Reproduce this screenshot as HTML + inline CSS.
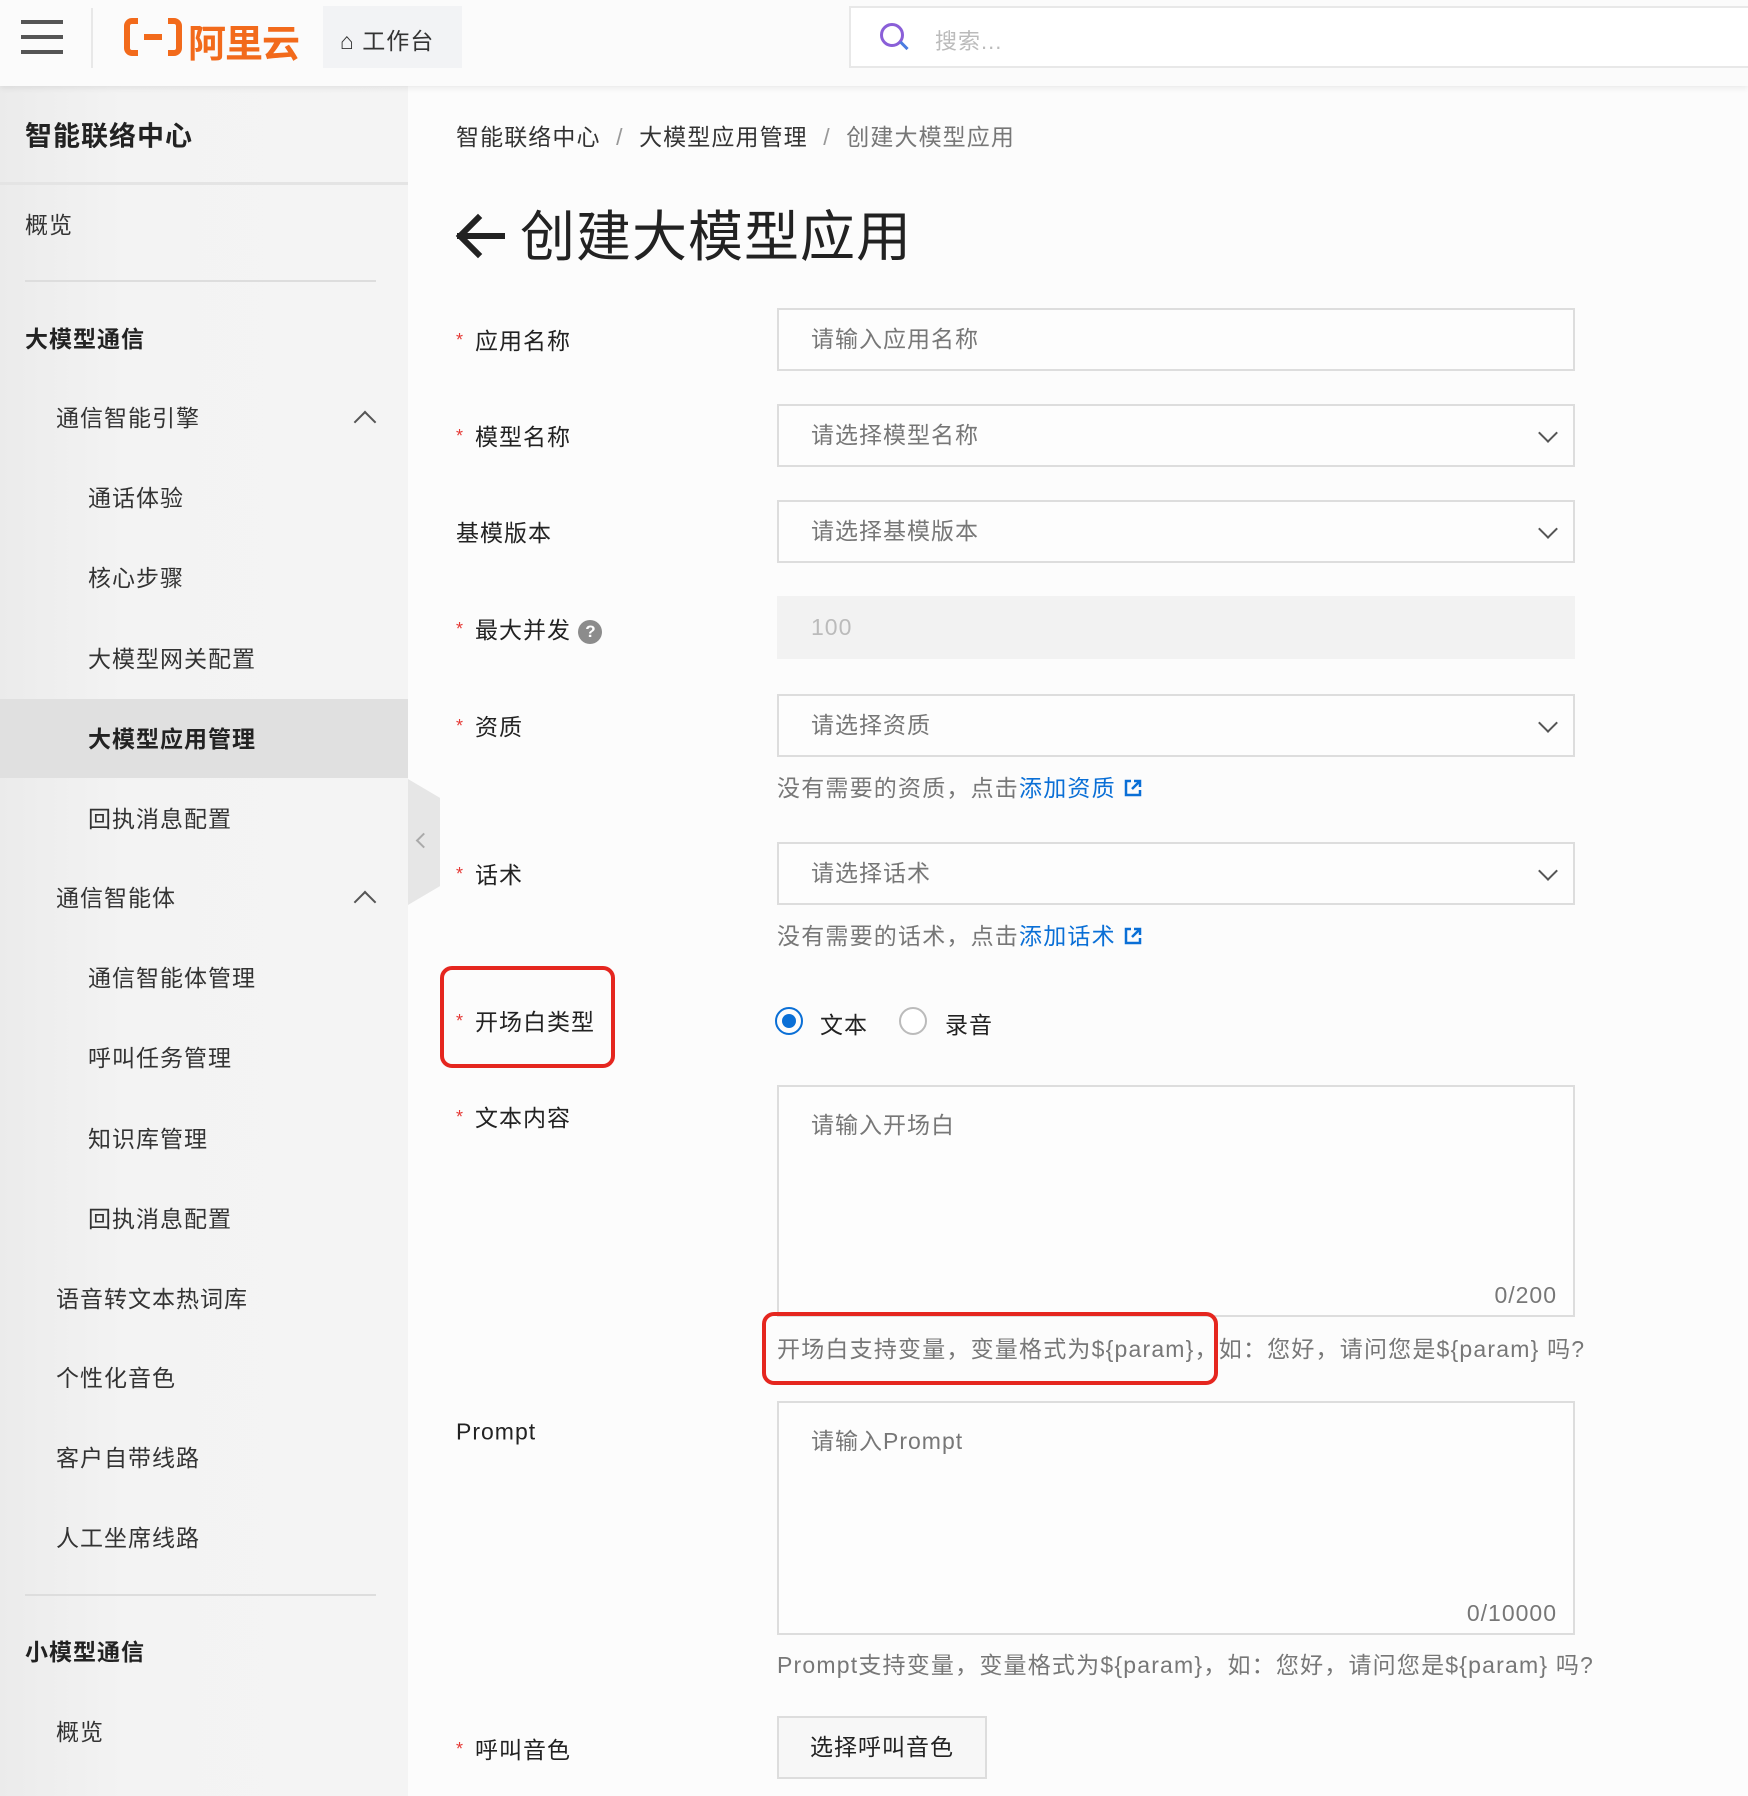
<!DOCTYPE html>
<html><head><meta charset="utf-8"><style>
*{box-sizing:border-box;margin:0;padding:0}
body{width:1748px;height:1796px;overflow:hidden;background:#fcfcfc;font-family:"Liberation Sans","Noto Sans CJK SC",sans-serif;color:#333;position:relative;letter-spacing:1px}
.a{position:absolute;white-space:nowrap}
.top{position:absolute;left:0;top:0;width:1748px;height:86px;background:#fbfbfb;box-shadow:0 2px 6px rgba(0,0,0,.08);z-index:2}
.side{position:absolute;left:0;top:86px;width:408px;height:1710px;background:linear-gradient(90deg,#ebebeb,#f3f3f3 30%,#f4f4f4)}
.si{position:absolute;font-size:23px;color:#333;transform:translateY(-50%);margin-top:-2px}
.b{font-weight:bold;color:#222}
.lbl{position:absolute;left:456px;font-size:23px;color:#222;transform:translateY(-50%)}
.lbl i{color:#e53935;font-style:normal;font-size:18px;margin-right:11px;position:relative;top:-3px}
.inp{position:absolute;left:777px;width:798px;height:63px;border:2px solid #ddd;background:#fdfdfd;font-size:23px;color:#777;padding-left:32px;line-height:59px}
.chev{position:absolute;right:18px;top:20px;width:14px;height:14px;border-right:2.5px solid #555;border-bottom:2.5px solid #555;transform:rotate(45deg)}
.hint{position:absolute;left:777px;font-size:23px;color:#777;transform:translateY(-50%);letter-spacing:1.2px}
.lnk{color:#0a6fd6}
.red{position:absolute;border:4px solid #e5261f;border-radius:12px}
</style></head><body>
<div class="top">
 <div class="a" style="left:21px;top:20px;width:42px;height:4px;background:#555;box-shadow:0 15px 0 #555,0 30px 0 #555"></div>
 <div class="a" style="left:91px;top:8px;width:2px;height:60px;background:#e8e8e8"></div>
 <div class="a" style="left:124px;top:18px;width:58px;height:38px;border:6px solid #f26a1b;border-radius:8px"></div>
 <div class="a" style="left:144px;top:34px;width:18px;height:6px;background:#f26a1b"></div>
 <div class="a" style="left:138px;top:12px;width:30px;height:12px;background:#fbfbfb"></div>
 <div class="a" style="left:138px;top:50px;width:30px;height:12px;background:#fbfbfb"></div>
 <div class="a" style="left:188px;top:13px;font-size:38px;font-weight:bold;color:#f26a1b;letter-spacing:-1px">阿里云</div>
 <div class="a" style="left:323px;top:6px;width:139px;height:62px;background:#f2f3f5"></div>
 <div class="a" style="left:340px;top:22px;font-size:23px;color:#333">⌂ 工作台</div>
 <div class="a" style="left:849px;top:6px;width:910px;height:62px;border:2px solid #e8e8e8;background:#fff"></div>
 <div class="a" style="left:880px;top:23px;width:24px;height:24px;border:3px solid #8a5fd8;border-radius:50%"></div>
 <div class="a" style="left:899px;top:44px;width:10px;height:3px;background:#4a7be0;transform:rotate(45deg)"></div>
 <div class="a" style="left:935px;top:24px;font-size:22px;color:#bbb">搜索...</div>
</div>
<div class="side">
 <div class="si b" style="left:25px;top:50px;font-size:27px">智能联络中心</div>
 <div class="a" style="left:0;top:96px;width:408px;height:3px;background:#e4e4e4"></div>
 <div class="si" style="left:25px;top:139px">概览</div>
 <div class="a" style="left:25px;top:194px;width:351px;height:2px;background:#ddd"></div>
 <div class="si b" style="left:25px;top:253px">大模型通信</div>
 <div class="si" style="left:56px;top:332px">通信智能引擎</div>
 <div class="a" style="left:357px;top:328px;width:16px;height:16px;border-left:2.5px solid #555;border-top:2.5px solid #555;transform:rotate(45deg)"></div>
 <div class="si" style="left:88px;top:412px">通话体验</div>
 <div class="si" style="left:88px;top:492px">核心步骤</div>
 <div class="si" style="left:88px;top:573px">大模型网关配置</div>
 <div class="a" style="left:0;top:613px;width:408px;height:79px;background:#e0e0e0"></div>
 <div class="si b" style="left:88px;top:653px">大模型应用管理</div>
 <div class="si" style="left:88px;top:733px">回执消息配置</div>
 <div class="si" style="left:56px;top:812px">通信智能体</div>
 <div class="a" style="left:357px;top:808px;width:16px;height:16px;border-left:2.5px solid #555;border-top:2.5px solid #555;transform:rotate(45deg)"></div>
 <div class="si" style="left:88px;top:892px">通信智能体管理</div>
 <div class="si" style="left:88px;top:972px">呼叫任务管理</div>
 <div class="si" style="left:88px;top:1053px">知识库管理</div>
 <div class="si" style="left:88px;top:1133px">回执消息配置</div>
 <div class="si" style="left:56px;top:1213px">语音转文本热词库</div>
 <div class="si" style="left:56px;top:1292px">个性化音色</div>
 <div class="si" style="left:56px;top:1372px">客户自带线路</div>
 <div class="si" style="left:56px;top:1452px">人工坐席线路</div>
 <div class="a" style="left:25px;top:1508px;width:351px;height:2px;background:#ddd"></div>
 <div class="si b" style="left:25px;top:1566px">小模型通信</div>
 <div class="si" style="left:56px;top:1646px">概览</div>
</div>
<div class="a" style="left:408px;top:779px;width:32px;height:126px;background:#e6e6e6;clip-path:polygon(0 0,100% 15%,100% 85%,0 100%)"></div>
<div class="a" style="left:418px;top:835px;width:11px;height:11px;border-left:2px solid #aaa;border-bottom:2px solid #aaa;transform:rotate(45deg)"></div>

<div class="a" style="left:456px;top:118px;font-size:23px;color:#333;letter-spacing:1.1px">智能联络中心 <span style="color:#999;margin:0 8px">/</span> 大模型应用管理 <span style="color:#999;margin:0 8px">/</span> <span style="color:#777">创建大模型应用</span></div>
<svg class="a" style="left:454px;top:213px" width="52" height="46" viewBox="0 0 52 46"><path d="M48 23H6M24 5L6 23l18 18" fill="none" stroke="#222" stroke-width="6" stroke-linecap="square"/></svg>
<div class="a" style="left:520px;top:192px;font-size:55px;color:#222;letter-spacing:1px">创建大模型应用</div>

<div class="lbl" style="top:339px"><i>*</i>应用名称</div>
<div class="inp" style="top:308px">请输入应用名称</div>
<div class="lbl" style="top:435px"><i>*</i>模型名称</div>
<div class="inp" style="top:404px">请选择模型名称<div class="chev"></div></div>
<div class="lbl" style="top:531px">基模版本</div>
<div class="inp" style="top:500px">请选择基模版本<div class="chev"></div></div>
<div class="lbl" style="top:628px"><i>*</i>最大并发 <span style="display:inline-block;width:24px;height:24px;border-radius:50%;background:#8c8c8c;color:#fff;font-size:17px;text-align:center;line-height:24px;font-weight:bold;vertical-align:middle;letter-spacing:0">?</span></div>
<div class="inp" style="top:596px;border-color:#f2f2f2;background:#f2f2f2;color:#bbb">100</div>
<div class="lbl" style="top:725px"><i>*</i>资质</div>
<div class="inp" style="top:694px">请选择资质<div class="chev"></div></div>
<div class="hint" style="top:786px">没有需要的资质，点击<span class="lnk">添加资质</span> <svg width="20" height="20" viewBox="0 0 20 20" style="vertical-align:-2px"><path d="M8 3H3v14h14v-5M11 3h6v6M17 3l-8 8" fill="none" stroke="#0a6fd6" stroke-width="2.5"/></svg></div>
<div class="lbl" style="top:873px"><i>*</i>话术</div>
<div class="inp" style="top:842px">请选择话术<div class="chev"></div></div>
<div class="hint" style="top:934px">没有需要的话术，点击<span class="lnk">添加话术</span> <svg width="20" height="20" viewBox="0 0 20 20" style="vertical-align:-2px"><path d="M8 3H3v14h14v-5M11 3h6v6M17 3l-8 8" fill="none" stroke="#0a6fd6" stroke-width="2.5"/></svg></div>
<div class="lbl" style="top:1020px"><i>*</i>开场白类型</div>
<div class="red" style="left:440px;top:966px;width:175px;height:102px"></div>
<div class="a" style="left:775px;top:1007px;width:28px;height:28px;border:2px solid #0a6fd6;border-radius:50%"></div>
<div class="a" style="left:782px;top:1014px;width:14px;height:14px;background:#0a6fd6;border-radius:50%"></div>
<div class="a" style="left:820px;top:1006px;font-size:23px;color:#222">文本</div>
<div class="a" style="left:899px;top:1007px;width:28px;height:28px;border:2px solid #bbb;border-radius:50%;background:#fff"></div>
<div class="a" style="left:945px;top:1006px;font-size:23px;color:#222">录音</div>
<div class="lbl" style="top:1116px"><i>*</i>文本内容</div>
<div class="inp" style="top:1085px;height:232px;line-height:normal;padding-top:19px">请输入开场白<div class="a" style="right:16px;bottom:6px;font-size:23px;color:#777">0/200</div></div>
<div class="hint" style="top:1347px">开场白支持变量，变量格式为${param}，如：您好，请问您是${param} 吗?</div>
<div class="red" style="left:762px;top:1312px;width:456px;height:73px"></div>
<div class="lbl" style="top:1432px">Prompt</div>
<div class="inp" style="top:1401px;height:234px;line-height:normal;padding-top:19px">请输入Prompt<div class="a" style="right:16px;bottom:6px;font-size:23px;color:#777">0/10000</div></div>
<div class="hint" style="top:1663px">Prompt支持变量，变量格式为${param}，如：您好，请问您是${param} 吗?</div>
<div class="lbl" style="top:1748px"><i>*</i>呼叫音色</div>
<div class="a" style="left:777px;top:1716px;width:210px;height:63px;border:2px solid #ddd;background:#f7f7f7;font-size:23px;color:#222;text-align:center;line-height:59px">选择呼叫音色</div>
</body></html>
